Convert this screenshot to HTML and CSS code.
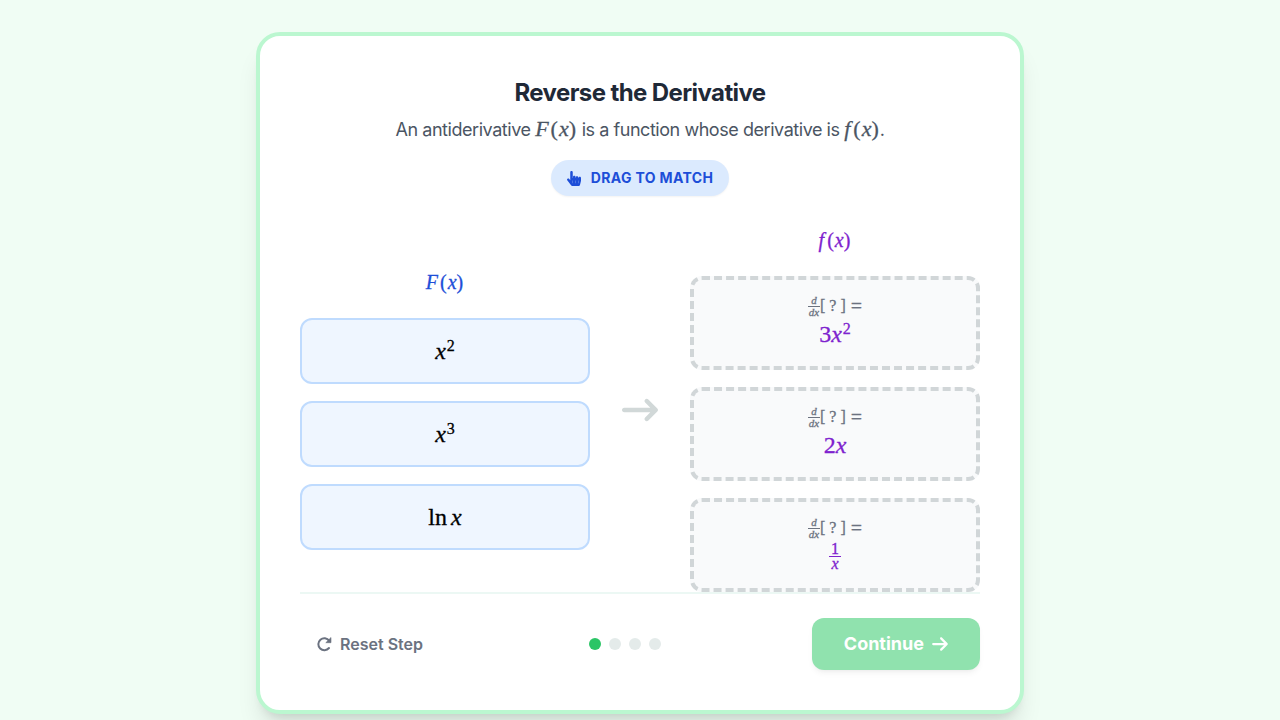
FILE: index.html
```html
<!DOCTYPE html>
<html lang="en">
<head>
<meta charset="utf-8">
<meta name="viewport" content="width=device-width, initial-scale=1">
<title>Reverse the Derivative</title>
<link rel="stylesheet" href="styles.css">
</head>
<body>
<main class="card">
  <header class="intro">
    <h1 class="title">Reverse the Derivative</h1>
    <p class="subtitle">An antiderivative <span class="math"><i class="cap">F</i><span class="paren">(</span><i>x</i><span class="paren">)</span></span> is a function whose derivative is <span class="math"><i class="func">f</i><span class="paren">(</span><i>x</i><span class="paren">)</span></span>.</p>
    <div class="pill">
      <svg class="pill-icon" viewBox="0 0 448 512" preserveAspectRatio="none" aria-hidden="true"><path fill="currentColor" d="M448 240v96c0 3.084-.356 6.159-1.063 9.162l-32 136C410.686 499.23 394.562 512 376 512H168a40.004 40.004 0 0 1-32.35-16.473l-127.997-176c-12.993-17.866-9.043-42.883 8.822-55.876 17.867-12.994 42.884-9.043 55.877 8.823L104 315.992V40c0-22.091 17.908-40 40-40s40 17.909 40 40v200h8v-40c0-22.091 17.908-40 40-40s40 17.909 40 40v40h8v-24c0-22.091 17.908-40 40-40s40 17.909 40 40v24h8c0-22.091 17.908-40 40-40s40 17.909 40 40zm-256 80h-8v96h8v-96zm88 0h-8v96h8v-96zm88 0h-8v96h8v-96z"/></svg>
      <span>Drag to Match</span>
    </div>
  </header>

  <section class="board">
    <div class="column">
      <h2 class="label label-blue"><span class="math"><i class="cap">F</i><span class="paren">(</span><i>x</i><span class="paren">)</span></span></h2>
      <div class="stack">
        <button class="tile" type="button"><span class="math"><i>x</i><sup>2</sup></span></button>
        <button class="tile" type="button"><span class="math"><i>x</i><sup>3</sup></span></button>
        <button class="tile" type="button"><span class="math">ln<i class="operand">x</i></span></button>
      </div>
    </div>

    <svg class="flow-arrow" viewBox="0 0 512 512" aria-hidden="true"><path fill="currentColor" d="M502.600 278.600c12.500-12.500 12.500-32.800 0-45.300l-128-128c-12.500-12.500-32.800-12.500-45.300 0s-12.500 32.800 0 45.300L402.700 224 32 224c-17.700 0-32 14.300-32 32s14.300 32 32 32l370.700 0-73.400 73.400c-12.500 12.500-12.500 32.800 0 45.300s32.800 12.500 45.300 0l128-128z"/></svg>

    <div class="column">
      <h2 class="label label-purple"><span class="math"><i class="func">f</i><span class="paren">(</span><i>x</i><span class="paren">)</span></span></h2>
      <div class="stack">
        <div class="zone">
          <div class="prompt math"><span class="frac"><i>d</i><i class="den">dx</i></span><span>[</span><span class="unknown">?</span><span>]</span><span class="equals">=</span></div>
          <div class="result math"><span>3<i>x</i><sup>2</sup></span></div>
        </div>
        <div class="zone">
          <div class="prompt math"><span class="frac"><i>d</i><i class="den">dx</i></span><span>[</span><span class="unknown">?</span><span>]</span><span class="equals">=</span></div>
          <div class="result math"><span>2<i>x</i></span></div>
        </div>
        <div class="zone">
          <div class="prompt math"><span class="frac"><i>d</i><i class="den">dx</i></span><span>[</span><span class="unknown">?</span><span>]</span><span class="equals">=</span></div>
          <div class="result math"><span class="frac frac-large"><span>1</span><i class="den">x</i></span></div>
        </div>
      </div>
    </div>
  </section>

  <footer class="footer">
    <button class="reset" type="button">
      <svg class="reset-icon" viewBox="0 0 16 16" aria-hidden="true"><path d="M13.200 4.700A6 6 0 1 0 13 12" fill="none" stroke="currentColor" stroke-width="2" stroke-linecap="round"/><path d="M15 1.500v5.200H9.800z" fill="currentColor" stroke="currentColor" stroke-width=".6" stroke-linejoin="round"/></svg>
      <span>Reset Step</span>
    </button>
    <div class="dots" role="img" aria-label="Step 1 of 4">
      <span class="dot dot-active"></span><span class="dot"></span><span class="dot"></span><span class="dot"></span>
    </div>
    <button class="continue" type="button">
      <span>Continue</span>
      <svg class="continue-icon" viewBox="0 0 448 512" aria-hidden="true"><path fill="currentColor" d="M438.600 278.600c12.500-12.500 12.500-32.800 0-45.300l-160-160c-12.500-12.500-32.800-12.500-45.300 0s-12.500 32.800 0 45.300L338.800 224 32 224c-17.700 0-32 14.300-32 32s14.300 32 32 32l306.700 0L233.400 393.400c-12.500 12.500-12.500 32.800 0 45.300s32.800 12.500 45.300 0l160-160z"/></svg>
    </button>
  </footer>
</main>
</body>
</html>
```
FILE: styles.css
```css
* { box-sizing: border-box; }

body {
  margin: 0;
  padding: 32px 16px;
  min-height: 100vh;
  background: #f0fdf4;
  color: #1f2937;
  font-family: Inter, "Liberation Sans", sans-serif;
}

button { font-family: inherit; cursor: pointer; }

.card {
  max-width: 768px;
  margin: 0 auto;
  padding: 40px;
  background: #fff;
  border: 4px solid #bbf7d0;
  border-radius: 24px;
  box-shadow: 0 20px 25px -5px rgba(0, 0, 0, .1), 0 8px 10px -6px rgba(0, 0, 0, .1);
}

.intro {
  display: flex;
  flex-direction: column;
  align-items: center;
  text-align: center;
}

.title {
  margin: 0 0 6px;
  font-size: 24px;
  line-height: 34px;
  font-weight: 700;
  letter-spacing: -0.025em;
}

.subtitle {
  margin: 0 0 16px;
  font-size: 18px;
  line-height: 28px;
  letter-spacing: -0.025em;
  color: #4b5563;
}

.pill {
  display: flex;
  align-items: center;
  gap: 10px;
  height: 36px;
  padding: 0 16px;
  border-radius: 18px;
  background: #dbeafe;
  color: #1d4ed8;
  font-size: 14px;
  line-height: 20px;
  font-weight: 700;
  letter-spacing: 0.025em;
  text-transform: uppercase;
  box-shadow: 0 1px 2px rgba(0, 0, 0, .05);
}

.pill-icon { width: 14px; height: 15px; }

.math {
  font-family: "Liberation Serif", serif;
  font-weight: 400;
  letter-spacing: normal;
  -webkit-text-stroke: .3px;
}

.subtitle .math { font-size: 22px; line-height: 20px; }
.cap { padding-right: 2px; }
.func { padding-right: 3px; }
.paren { padding-right: 1px; }

.board {
  display: grid;
  grid-template-columns: 1fr 36px 1fr;
  column-gap: 32px;
  align-items: center;
  margin-top: 32px;
}

.label {
  margin: 0 0 24px;
  font-size: 20px;
  line-height: 24px;
  text-align: center;
}

.label-blue { color: #1d4ed8; }
.label-purple { color: #7e22ce; }

.stack { display: flex; flex-direction: column; gap: 17px; }

.tile {
  display: flex;
  align-items: center;
  justify-content: center;
  min-height: 66px;
  padding: 16px;
  border: 2px solid #bfdbfe;
  border-radius: 12px;
  background: #eff6ff;
  color: #000;
  font-size: 24px;
  line-height: 28px;
}

sup { padding-left: 1px; font-size: 16px; line-height: 0; vertical-align: 8px; }
.operand { padding-left: 4px; }

.flow-arrow { width: 36px; height: 36px; color: #d1d8d8; }

.zone {
  display: flex;
  flex-direction: column;
  align-items: center;
  min-height: 94px;
  padding: 14px 16px 8px;
  border: 4px dashed #d1d6d8;
  border-radius: 12px;
  background: #f9fafb;
}

.prompt {
  display: flex;
  align-items: center;
  height: 24px;
  font-size: 16px;
  line-height: 20px;
  color: #6b7280;
}

.unknown { padding: 0 4px; }
.equals { padding-left: 5px; font-size: 20px; }

.frac {
  display: inline-flex;
  flex-direction: column;
  align-items: center;
  font-size: 11px;
  line-height: 11px;
}

.den { min-width: 12px; border-top: 1px solid; text-align: center; }

.result {
  display: flex;
  align-items: center;
  height: 32px;
  font-size: 24px;
  line-height: 32px;
  color: #7e22ce;
}

.frac-large { font-size: 16px; line-height: 14px; }

.footer {
  display: flex;
  align-items: center;
  justify-content: space-between;
  padding-top: 24px;
  border-top: 2px solid #ecf8f4;
}

.reset {
  display: flex;
  align-items: center;
  gap: 8px;
  padding: 8px 16px;
  border: 0;
  background: none;
  color: #6b7280;
  font-size: 16px;
  line-height: 24px;
  font-weight: 600;
}

.reset-icon { width: 16px; height: 16px; }

.dots { display: flex; gap: 8px; }
.dot { width: 12px; height: 12px; border-radius: 50%; background: #e4ebea; }
.dot-active { background: #2bc566; }

.continue {
  display: flex;
  align-items: center;
  gap: 8px;
  padding: 12px 32px;
  border: 0;
  border-radius: 12px;
  background: #90e2ae;
  color: #fff;
  font-size: 18px;
  line-height: 28px;
  font-weight: 700;
  box-shadow: 0 4px 6px -1px rgba(0, 0, 0, .05), 0 2px 4px -2px rgba(0, 0, 0, .05);
}

.continue-icon { width: 16px; height: 18px; }
```
